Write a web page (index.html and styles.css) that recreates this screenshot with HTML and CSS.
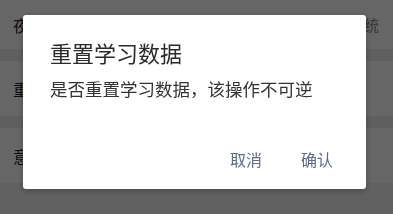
FILE: index.html
```html
<!DOCTYPE html>
<html lang="zh-CN">
<head>
    <meta charset="UTF-8">
    <meta name="viewport" content="width=device-width, initial-scale=1.0">
    <title>设置</title>
    <link rel="stylesheet" href="styles.css">
</head>
<body>
    <div class="settings">
        <div class="row row-first">
            <span class="row-label">夜间模式</span>
            <span class="row-value">跟随系统</span>
        </div>
        <div class="gap"></div>
        <div class="row">
            <span class="row-label">重置</span>
        </div>
        <div class="gap"></div>
        <div class="row">
            <span class="row-label">意见反馈</span>
            <svg class="chevron" width="8" height="12" viewBox="0 0 8 12">
                <path d="M1.5 1.5 L6 6 L1.5 10.5" fill="none" stroke="#555" stroke-width="1.6"/>
            </svg>
        </div>
    </div>

    <div class="mask">
        <div class="dialog">
            <div class="dialog-title">重置学习数据</div>
            <div class="dialog-text">是否重置学习数据，该操作不可逆</div>
            <div class="dialog-actions">
                <button class="btn">取消</button>
                <button class="btn">确认</button>
            </div>
        </div>
    </div>
</body>
</html>
```
FILE: styles.css
```css
html, body {
    margin: 0;
    padding: 0;
    height: 100%;
    overflow: hidden;
}
body {
    font-family: 'Noto Sans CJK SC', 'Noto Sans', sans-serif;
    background-color: #f2f2f2;
}
.settings {
    display: flex;
    flex-direction: column;
}
.row {
    height: 55px;
    display: flex;
    align-items: center;
    justify-content: space-between;
    padding: 0 14px 0 13px;
    background-color: #fff;
    font-size: 16px;
    color: #222;
}
.row-first {
    height: 49px;
}
.row-value {
    color: #888;
    font-size: 15px;
}
.gap {
    height: 12px;
    background-color: #ededed;
}
.chevron {
    margin-right: 17px;
}
.mask {
    position: fixed;
    top: 0;
    left: 0;
    right: 0;
    bottom: 0;
    background-color: rgba(0, 0, 0, 0.6);
    display: flex;
    align-items: flex-start;
    padding: 15px 27px 0 23px;
    box-sizing: border-box;
}
.dialog {
    width: 343px;
    height: 174px;
    background-color: #fff;
    border-radius: 3px;
    box-shadow: 0 2px 6px rgba(0, 0, 0, 0.25);
    box-sizing: border-box;
    padding: 22px 33px 0 27px;
    display: flex;
    flex-direction: column;
}
.dialog-title {
    font-size: 22px;
    line-height: 30px;
    color: #2b2b2b;
}
.dialog-text {
    margin-top: 10px;
    font-size: 17.5px;
    line-height: 24px;
    color: #333;
}
.dialog-actions {
    margin-top: 46px;
    display: flex;
    justify-content: flex-end;
    gap: 39px;
}
.btn {
    border: none;
    background: none;
    padding: 0;
    font-family: inherit;
    font-size: 16px;
    line-height: 24px;
    color: #5d6c8c;
    cursor: pointer;
}
```
